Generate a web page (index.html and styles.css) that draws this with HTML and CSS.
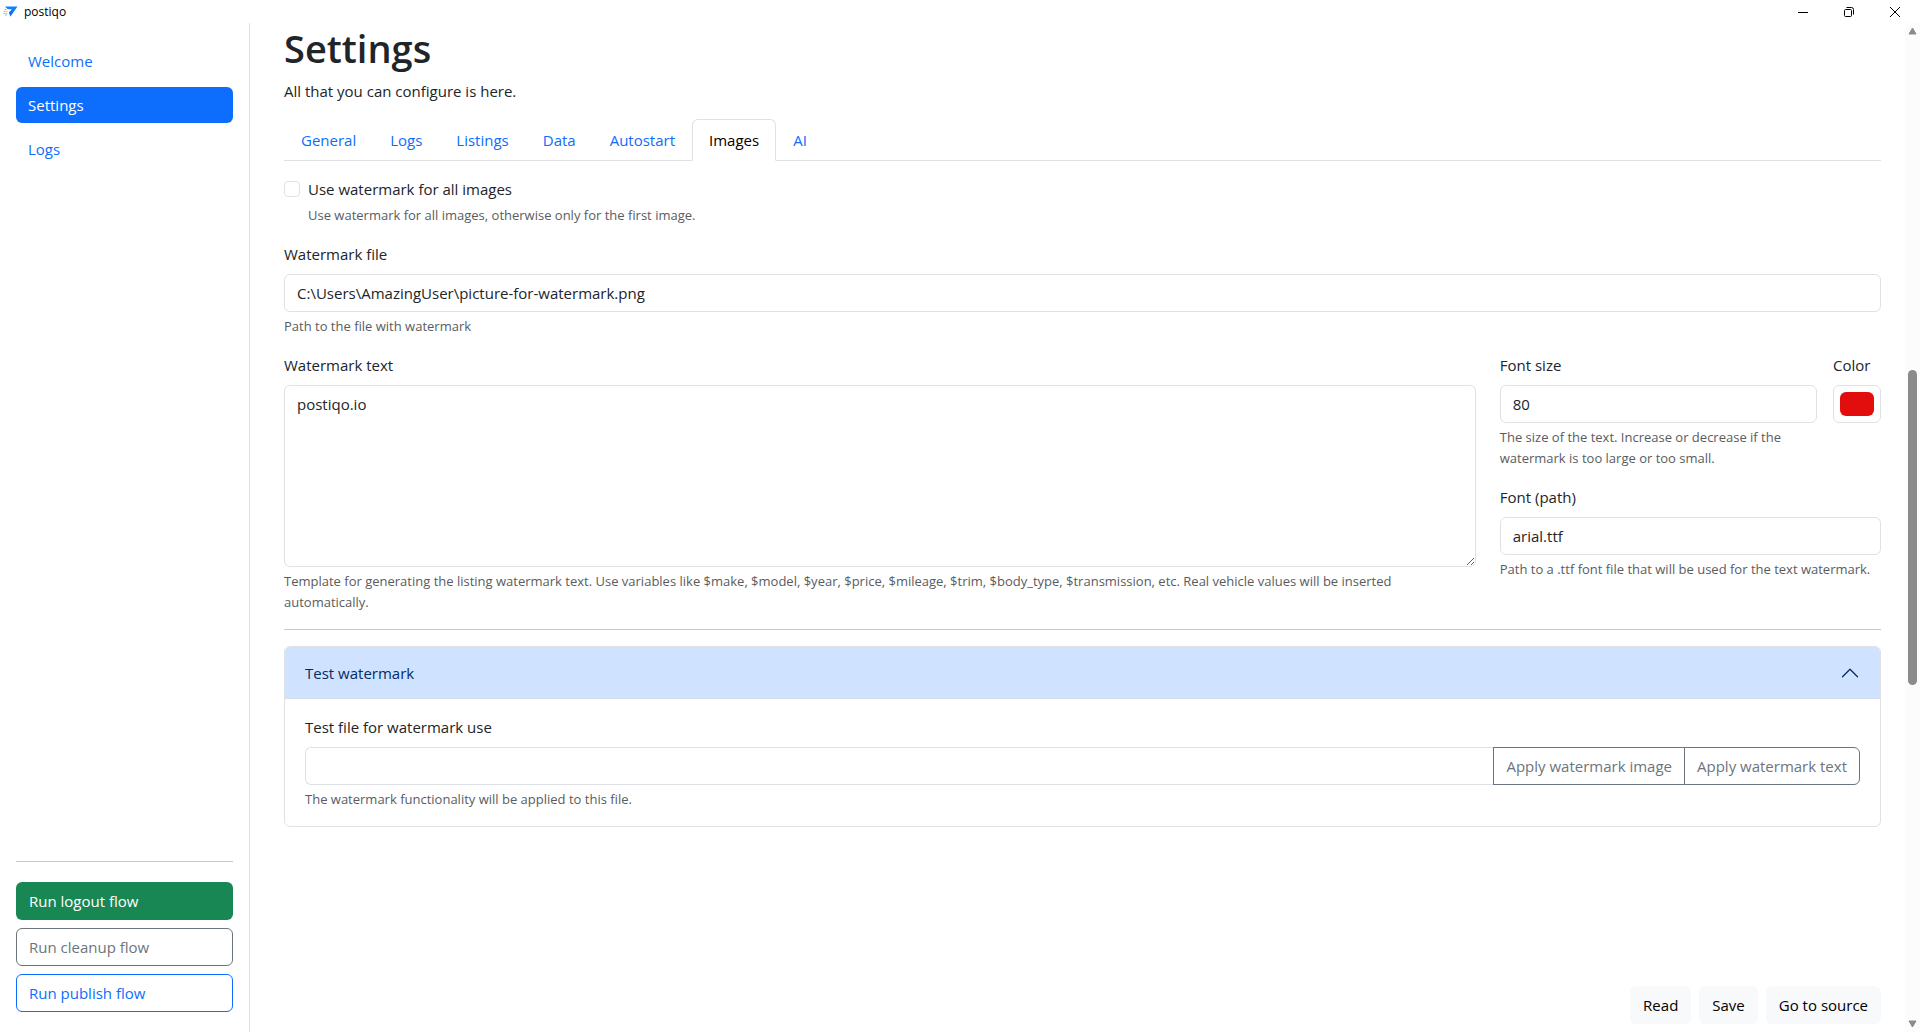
FILE: index.html
```html
<!DOCTYPE html>
<html lang="en">
<head>
  <meta charset="UTF-8">
  <meta name="viewport" content="width=device-width, initial-scale=1.0">
  <title>postiqo</title>
  <link rel="stylesheet" href="styles.css">
</head>
<body>
  <!-- Window title bar -->
  <header class="titlebar">
    <svg class="app-icon" width="16" height="14" viewBox="0 0 16 14" aria-hidden="true">
      <path d="M2 1.500H14.500L7.500 11.500L6 7.500L9 4.500L4.500 4Z" fill="#0d82ff"/>
      <path d="M6 7.500L10 4L7.500 11.500Z" fill="#1268e8"/>
      <path d="M1.500 4.500h3M0.500 6.500h4M0.500 8.500h4M2 10h3" stroke="#7dbcff" stroke-dasharray="2 1" fill="none"/>
    </svg>
    <span class="app-name">postiqo</span>
    <div class="window-controls">
      <button type="button" aria-label="Minimize">
        <svg width="12" height="12" viewBox="0 0 12 12"><path d="M1 6.500h10" stroke="#000" fill="none"/></svg>
      </button>
      <button type="button" aria-label="Restore">
        <svg width="12" height="12" viewBox="0 0 12 12" fill="none" stroke="#000"><rect x="1.500" y="3.500" width="7" height="7" rx="1"/><path d="M3.500 1.500h5a2 2 0 0 1 2 2v5"/></svg>
      </button>
      <button type="button" aria-label="Close">
        <svg width="12" height="12" viewBox="0 0 12 12"><path d="M1 1l10 10M11 1L1 11" stroke="#000" fill="none"/></svg>
      </button>
    </div>
  </header>

  <div class="app">
    <aside class="sidebar">
      <nav class="side-nav">
        <a href="#welcome">Welcome</a>
        <a href="#settings" class="active">Settings</a>
        <a href="#logs">Logs</a>
      </nav>
      <div class="flows">
        <hr>
        <button type="button" class="btn btn-success">Run logout flow</button>
        <button type="button" class="btn btn-outline-secondary">Run cleanup flow</button>
        <button type="button" class="btn btn-outline-primary">Run publish flow</button>
      </div>
    </aside>

    <main class="content">
      <h1>Settings</h1>
      <p>All that you can configure is here.</p>

      <nav class="tabs">
        <a href="#general">General</a>
        <a href="#tab-logs">Logs</a>
        <a href="#listings">Listings</a>
        <a href="#data">Data</a>
        <a href="#autostart">Autostart</a>
        <a href="#images" class="active">Images</a>
        <a href="#ai">AI</a>
      </nav>

      <form id="images" class="settings-form">
        <div class="form-check">
          <input type="checkbox" id="useForAll">
          <div>
            <label for="useForAll">Use watermark for all images</label>
            <div class="form-text">Use watermark for all images, otherwise only for the first image.</div>
          </div>
        </div>

        <div class="field">
          <label for="watermarkFile">Watermark file</label>
          <input type="text" class="form-control" id="watermarkFile" value="C:\Users\AmazingUser\picture-for-watermark.png">
          <div class="form-text">Path to the file with watermark</div>
        </div>

        <div class="row">
          <div class="field col-text">
            <label for="watermarkText">Watermark text</label>
            <textarea class="form-control" id="watermarkText" rows="7">postiqo.io</textarea>
            <div class="form-text">Template for generating the listing watermark text. Use variables like $make, $model, $year, $price, $mileage, $trim, $body_type, $transmission, etc. Real vehicle values will be inserted automatically.</div>
          </div>
          <div class="col-font">
            <div class="font-row">
              <div class="field field-size">
                <label for="fontSize">Font size</label>
                <input type="text" class="form-control" id="fontSize" value="80">
                <div class="form-text">The size of the text. Increase or decrease if the watermark is too large or too small.</div>
              </div>
              <div class="field field-color">
                <label for="color">Color</label>
                <input type="color" class="form-color" id="color" value="#e20d0d">
              </div>
            </div>
            <div class="field">
              <label for="fontPath">Font (path)</label>
              <input type="text" class="form-control" id="fontPath" value="arial.ttf">
              <div class="form-text">Path to a .ttf font file that will be used for the text watermark.</div>
            </div>
          </div>
        </div>

        <hr>

        <section class="accordion">
          <button type="button" class="accordion-button" aria-expanded="true">
            <span>Test watermark</span>
            <svg width="20" height="20" viewBox="0 0 16 16" aria-hidden="true"><path d="M2 11L8 5L14 11" fill="none" stroke="#052c65" stroke-linecap="round" stroke-linejoin="round"/></svg>
          </button>
          <div class="accordion-body">
            <label for="testFile">Test file for watermark use</label>
            <div class="input-group">
              <input type="text" class="form-control" id="testFile">
              <button type="button" class="btn btn-outline-secondary">Apply watermark image</button>
              <button type="button" class="btn btn-outline-secondary">Apply watermark text</button>
            </div>
            <div class="form-text">The watermark functionality will be applied to this file.</div>
          </div>
        </section>
      </form>

      <footer class="actions">
        <button type="button" class="btn btn-light">Read</button>
        <button type="button" class="btn btn-light">Save</button>
        <button type="button" class="btn btn-light">Go to source</button>
      </footer>
    </main>

    <div class="scrollbar" aria-hidden="true">
      <svg width="9" height="8" viewBox="0 0 9 8"><path d="M4.500 1L8 7H1Z" fill="#8b8b8b" stroke="#8b8b8b" stroke-linejoin="round"/></svg>
      <div class="scroll-track"><div class="scroll-thumb"></div></div>
      <svg width="9" height="8" viewBox="0 0 9 8"><path d="M1 1H8L4.500 7Z" fill="#8b8b8b" stroke="#8b8b8b" stroke-linejoin="round"/></svg>
    </div>
  </div>
</body>
</html>
```
FILE: styles.css
```css
* {
  box-sizing: border-box;
}

body {
  display: flex;
  flex-direction: column;
  height: 100vh;
  margin: 0;
  overflow: hidden;
  font-family: "Open Sans", "Noto Sans", sans-serif;
  font-size: 15px;
  line-height: 24px;
  color: #212529;
  background-color: #fff;
}

button,
input,
textarea {
  font: inherit;
  color: inherit;
}

button {
  cursor: pointer;
}

a {
  color: #0d6efd;
  text-decoration: none;
}

hr {
  width: 100%;
  margin: 0;
  border: 0;
  border-top: 1px solid #c7c8c9;
}

/* Title bar */
.titlebar {
  display: flex;
  align-items: center;
  height: 23px;
  padding: 0 2px 0 3px;
  color: #000;
}

.app-name {
  margin-left: 5px;
  font-size: 12px;
}

.window-controls {
  display: flex;
  margin-left: auto;
}

.window-controls button {
  display: flex;
  align-items: center;
  justify-content: center;
  width: 46px;
  height: 22px;
  padding: 0;
  border: 0;
  background: none;
}

.app {
  display: flex;
  flex: 1;
  min-height: 0;
}

/* Sidebar */
.sidebar {
  display: flex;
  flex-direction: column;
  justify-content: space-between;
  width: 250px;
  padding: 20px 16px;
  border-right: 1px solid #dee2e6;
}

.side-nav,
.flows {
  display: flex;
  flex-direction: column;
  gap: 8px;
}

.side-nav a {
  padding: 6px 12px;
  border-radius: 6px;
}

.side-nav a.active {
  color: #fff;
  background-color: #0d6efd;
}

.flows hr {
  margin-bottom: 12px;
}

.btn {
  padding: 6px 12px;
  border: 1px solid transparent;
  border-radius: 6px;
  background-color: #fff;
  text-align: left;
  white-space: nowrap;
}

.btn-success {
  color: #fff;
  background-color: #198754;
}

.btn-outline-secondary {
  color: #6c757d;
  border-color: #6c757d;
}

.btn-outline-primary {
  color: #0d6efd;
  border-color: #0d6efd;
}

.btn-light {
  color: #000;
  background-color: #f8f9fa;
}

/* Content */
.content {
  display: flex;
  flex: 1;
  flex-direction: column;
  min-width: 0;
  padding: 0 24px 8px 34px;
}

h1 {
  margin: 0 0 6px;
  font-size: 38px;
  font-weight: 600;
  line-height: 50px;
}

p {
  margin: 0 0 16px;
}

.tabs {
  display: flex;
  border-bottom: 1px solid #dee2e6;
}

.tabs a {
  margin-bottom: -1px;
  padding: 8px 16px;
  border: 1px solid transparent;
  border-radius: 6px 6px 0 0;
}

.tabs a.active {
  color: #000;
  background-color: #fff;
  border-color: #dee2e6 #dee2e6 #fff;
}

.settings-form {
  display: flex;
  flex-direction: column;
  gap: 16px;
  padding-top: 16px;
}

.form-check {
  display: flex;
  gap: 8px;
}

.form-check input {
  width: 16px;
  height: 16px;
  margin: 4px 0 0;
  border: 1px solid #dee2e6;
  border-radius: 4px;
  appearance: none;
}

label {
  display: block;
}

.field label,
.accordion-body label {
  margin-bottom: 8px;
}

.form-text {
  margin-top: 4px;
  font-size: 13px;
  line-height: 21px;
  color: #595c5f;
}

.form-control {
  display: block;
  width: 100%;
  padding: 6px 12px;
  border: 1px solid #dee2e6;
  border-radius: 6px;
  background-color: #fff;
}

input.form-control {
  height: 38px;
}

textarea.form-control {
  resize: vertical;
}

.row {
  display: grid;
  grid-template-columns: repeat(12, 1fr);
  column-gap: 24px;
}

.col-text {
  grid-column: span 9;
}

.col-font {
  display: flex;
  flex-direction: column;
  grid-column: span 3;
  gap: 16px;
}

.font-row {
  display: flex;
  gap: 16px;
}

.field-size {
  flex: 1;
}

.field-color {
  width: 48px;
}

.form-color {
  display: block;
  width: 48px;
  height: 38px;
  padding: 6px;
  border: 1px solid #dee2e6;
  border-radius: 6px;
  background-color: #fff;
}

.form-color::-webkit-color-swatch-wrapper {
  padding: 0;
}

.form-color::-webkit-color-swatch {
  border: 0;
  border-radius: 6px;
}

/* Accordion */
.accordion {
  border: 1px solid #dee2e6;
  border-radius: 6px;
  overflow: hidden;
}

.accordion-button {
  display: flex;
  align-items: center;
  justify-content: space-between;
  width: 100%;
  height: 52px;
  padding: 0 20px;
  border: 0;
  border-bottom: 1px solid #d5dcea;
  color: #052c65;
  background-color: #cfe2ff;
}

.accordion-body {
  padding: 16px 20px;
}

.input-group {
  display: flex;
}

.input-group .form-control {
  flex: 1;
  border-right: 0;
  border-radius: 6px 0 0 6px;
}

.input-group .btn {
  border-radius: 0;
}

.input-group .btn:last-child {
  margin-left: -1px;
  border-radius: 0 6px 6px 0;
}

.actions {
  display: flex;
  justify-content: flex-end;
  gap: 8px;
  margin-top: auto;
}

/* Scrollbar */
.scrollbar {
  display: flex;
  flex-direction: column;
  align-items: center;
  width: 15px;
  padding: 4px 0;
  background-color: #fcfcfc;
}

.scroll-track {
  display: flex;
  flex: 1;
  flex-direction: column;
  justify-content: center;
}

.scroll-thumb {
  width: 9px;
  height: 32%;
  border-radius: 5px;
  background-color: #8b8b8b;
}
```
